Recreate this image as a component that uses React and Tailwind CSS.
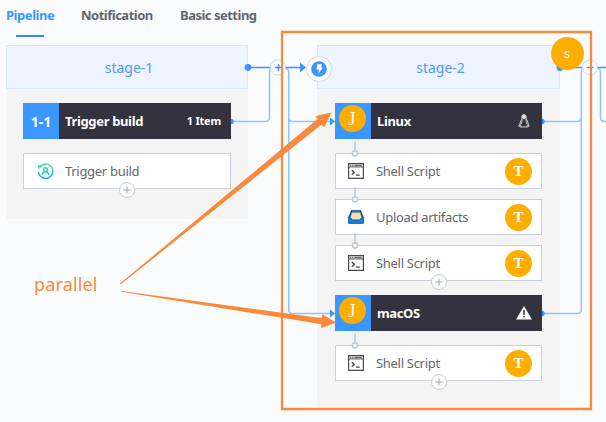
import React from "react";

function Terminal() {
  return (
    <svg width="16" height="16" viewBox="0 0 16 16" fill="none" stroke="#48484d">
      <path d="M.6.6h14.8v14.8H.6z" strokeWidth="1.2" />
      <path d="M.6 3.9h14.8" strokeWidth="1" />
      <path d="M2 2.3h1.3M4.2 2.3h1.3M6.4 2.3h7.4" strokeWidth="1" />
      <path d="M3.8 7 6.3 9.4 3.8 11.800M7.800 12.100h4" strokeWidth="1.4" />
    </svg>
  );
}

function Inbox() {
  return (
    <svg width="16" height="16" viewBox="0 0 16 16">
      <path d="M3.2 1h9.6L16 8.500V14l-1 .7H1L0 14V8.500z" fill="#20558f" />
      <path d="M4.2 2.500h7.600l2.200 8H2z" fill="#f3deb0" />
      <path d="M4.600 1.500h6.800l.8 2.200H3.800z" fill="#5d7183" />
      <path d="M0 9h3.600l1.200 2.400h6.400L12.400 9H16v5l-1 .7H1L0 14z" fill="#1478d4" />
    </svg>
  );
}

function Manual() {
  return (
    <svg width="17" height="17" viewBox="0 0 17 17" fill="none">
      <defs>
        <linearGradient id="manual" x1="0" y1="0" x2="0" y2="17" gradientUnits="userSpaceOnUse">
          <stop stopColor="#3be69b" />
          <stop offset="1" stopColor="#2ca9ee" />
        </linearGradient>
      </defs>
      <g stroke="url(#manual)">
        <path d="M2.5 4.4A7.2 7.2 0 1 1 1.5 8.7" strokeWidth="1.5" />
        <circle cx="8.6" cy="6.7" r="1.9" strokeWidth="1.4" />
        <path d="M5.4 12c.1-2 1.4-3.3 3.2-3.3s3 1.3 3.2 3.3" strokeWidth="1.4" />
      </g>
      <path d="M.7 1.8 5.2 3.6 1.6 6.3z" fill="#3be69b" />
    </svg>
  );
}

function Penguin() {
  return (
    <svg width="12" height="14" viewBox="0 0 12 14" fill="none" stroke="#e4e4e8">
      <path d="M4 4.2C3.4 1.5 4.5.6 6 .6s2.5 1 2.1 3.6c.2 1.5 2 3 2 5.6 0 1.5-1 2.9-2.2 3.1H4.2c-1.5-.2-2.3-1.5-2.2-3.1.1-2.6 1.8-4 2-5.6z" strokeWidth=".9" />
      <path d="M4.2 4.200V1.6L6 .8l1.800.8v2.600L6 5.200z" fill="#e4e4e8" stroke="none" />
      <path d="M4.2 5.2c.3 2-1 2.5-.7 4.8M7.8 5.2c0 2 1.2 2.7.8 4.8M2 10 .7 12l3 1.3M10 10l1.3 2-3 1.3" strokeWidth=".9" />
    </svg>
  );
}

function Warning() {
  return (
    <svg width="16" height="14" viewBox="0 0 16 14">
      <path d="M8 0 16 13.6H0z" fill="#fff" />
      <path d="M7.1 4.3h1.8l-.3 4.6H7.4zM7.2 10h1.6v1.6H7.2z" fill="#33323e" />
    </svg>
  );
}

function Badge({ children }) {
  return (
    <span className="flex h-[27px] w-[27px] shrink-0 items-center justify-center rounded-full bg-[#ffad00] font-['Liberation_Serif',serif] leading-none text-white">
      {children}
    </span>
  );
}

function JobBadge() {
  return (
    <span className="mr-[2px] mb-[5px]">
      <Badge>
        <span className="text-[18px] font-normal">J</span>
      </Badge>
    </span>
  );
}

function AddStep() {
  return (
    <span className="absolute -bottom-[10px] left-[95px] z-10 flex h-4 w-4 items-center justify-center rounded-full border border-[#c8cdd8] bg-white">
      <svg width="8" height="8" viewBox="0 0 8 8" stroke="#b8becb" strokeWidth="1.5">
        <path d="M4 .5v7M.5 4h7" />
      </svg>
    </span>
  );
}

function JobHeader({ number, name, right }) {
  return (
    <div className="flex h-9 items-center bg-[#33323e] pr-[10px] text-white">
      <div className="flex h-9 w-9 items-center justify-center bg-[#3c96ff] text-[14px] font-bold">{number}</div>
      <span className="ml-[6px] pt-px text-[13px] font-bold tracking-[-0.35px]">{name}</span>
      <span className="ml-auto flex items-center text-[11px] font-bold tracking-[-0.2px]">{right}</span>
    </div>
  );
}

function Step({ icon, name, badge, add, linked }) {
  return (
    <div className={"relative flex h-9 items-center border border-[#c9d0da] bg-white pr-[9px] text-[#63656e] " + (linked ? "pl-[12px]" : "pl-[13px]")}>
      {linked && (
        <svg className="absolute -top-[14px] left-[15px]" width="8" height="18" viewBox="0 0 8 18" fill="#fff" stroke="#bec6d0">
          <path d="M4 1v10" strokeWidth="1.5" />
          <circle cx="4" cy="13.3" r="2.6" strokeWidth="1.5" />
        </svg>
      )}
      <span className="flex w-[28px] items-center">{icon}</span>
      <span className="pt-[2px] text-[13px] tracking-[-0.3px]">{name}</span>
      {badge && (
        <span className="ml-auto pt-px">
          <Badge>
            <b className="text-[15px]">T</b>
          </Badge>
        </span>
      )}
      {add && <AddStep />}
    </div>
  );
}

function Stage({ name, className, bodyClassName, children }) {
  return (
    <section className={"shrink-0 bg-[#f4f4f4] " + className}>
      <h2 className="mb-[14px] flex h-[44px] items-center justify-center border border-[#d4e8ff] bg-[#edf4ff] pt-px pl-[4px] text-[14px] text-[#5398f5]">
        {name}
      </h2>
      <div className={bodyClassName}>{children}</div>
    </section>
  );
}

function Connectors() {
  return (
    <svg className="absolute top-0 left-0" width="606" height="422" viewBox="0 0 606 422" fill="none">
      <g stroke="#8fc3ff" strokeWidth="1.5">
        <path d="M231 121.5h34q4.500 0 4.500-4V72q0-4 4-4" />
        <path d="M284 68q4.700 0 4.700 4v45.500q0 4 4 4H331M288.700 100v209.500q0 4 4 4H331" />
        <path d="M542 121.500h35q4.300 0 4.300-4V72q0-4 4-4M542 313.500h35q4.300 0 4.300-4V110" />
        <path d="M596 68q4.500 0 4.500 4v45.500q0 4 4 4h3" />
      </g>
      <path d="M248 67.500h54M560 67.500h46" stroke="#3c96ff" strokeWidth="1.500" />
      <g fill="#3c96ff">
        <circle cx="248" cy="67.500" r="3.400" />
        <circle cx="560" cy="67.500" r="3.400" />
        <path d="M231 118.800a2.700 2.700 0 0 1 0 5.400zM542 118.800a2.700 2.700 0 0 1 0 5.400zM542 310.800a2.700 2.700 0 0 1 0 5.400z" />
        <path d="M300 62.500 306 67.500 300 72.500zM330 117.500 335 121.500 330 125.500zM330 309.500 335 313.500 330 317.500z" />
      </g>
      <g fill="#fff" stroke="#c1ddff">
        <circle cx="278" cy="67.500" r="7.500" />
        <circle cx="590" cy="67.500" r="7.500" />
      </g>
      <path d="M278.500 64v7M275 67.500h7M586.500 67.500h7" stroke="#3c96ff" strokeWidth="1.500" />
      <circle cx="319" cy="69" r="12.500" fill="#fff" stroke="#d1d6e8" />
      <circle cx="319" cy="69" r="7.800" fill="#3c96ff" />
      <path d="M317.300 64.300h4.800l-1.200 3.200h1.700l-4.200 6.400.6-4.300h-2.500z" fill="#fff" />
    </svg>
  );
}

function Annotations() {
  return (
    <svg className="absolute top-0 left-0 z-20" width="606" height="422" viewBox="0 0 606 422">
      <path d="M120 283.500 317.500 119 315.500 116 331.500 112.500 324 127.500 321.500 124.500 120.500 284.500z" fill="#fa8a3b" />
      <path d="M121.500 291 321.500 318 322.500 314.300 336 322.500 321 328.300 321.500 324.300 121.500 291.800z" fill="#fa8a3b" />
      <path d="M282 32h309v377H282z" fill="none" stroke="#fa8a3b" strokeWidth="2.300" />
    </svg>
  );
}

export default function App() {
  return (
    <main className="relative h-[422px] w-[606px] overflow-hidden bg-[#fafbfd] font-['Noto_Sans',sans-serif]">
      <nav className="flex h-[45px] gap-[26px] pl-[6px] text-[13px] leading-[30px] font-bold text-[#63656e]">
        <div className="relative w-[49px] tracking-[-0.45px] whitespace-nowrap text-[#3c96ff]">
          Pipeline
          <span className="absolute top-[35px] left-[10px] h-[2px] w-[28px] bg-[#3c85ff]" />
        </div>
        <div className="w-[73px] tracking-[-0.5px] whitespace-nowrap">Notification</div>
        <div className="tracking-[-0.5px] whitespace-nowrap">Basic setting</div>
      </nav>

      <div className="flex items-start gap-[69px] pl-[6px]">
        <Stage name="stage-1" className="h-[174px] w-[242px]" bodyClassName="px-[17px]">
          <JobHeader number="1-1" name="Trigger build" right="1 Item" />
          <div className="mt-[14px]">
            <Step icon={<Manual />} name="Trigger build" add />
          </div>
        </Stage>

        <Stage name="stage-2" className="h-[363px] w-[243px]" bodyClassName="px-[18px]">
          <JobHeader number={<JobBadge />} name="Linux" right={<span className="mr-[2px]"><Penguin /></span>} />
          <div className="mt-[14px] mb-[14px] flex flex-col gap-[10px]">
            <Step icon={<Terminal />} name="Shell Script" badge linked />
            <Step icon={<Inbox />} name="Upload artifacts" badge linked />
            <Step icon={<Terminal />} name="Shell Script" badge linked add />
          </div>
          <JobHeader number={<JobBadge />} name="macOS" right={<Warning />} />
          <div className="mt-[14px]">
            <Step icon={<Terminal />} name="Shell Script" badge linked add />
          </div>
        </Stage>
      </div>

      <Connectors />
      <span className="absolute top-[37px] left-[551px] flex h-[33px] w-[33px] items-center justify-center rounded-full bg-[#ffad00] pt-px pr-px font-['DejaVu_Serif',serif] text-[12px] leading-none text-white">s</span>
      <Annotations />
      <p className="absolute top-[271px] left-[34px] text-[18px] leading-[27px] tracking-[0.15px] text-[#fa8a3b]">parallel</p>
    </main>
  );
}
